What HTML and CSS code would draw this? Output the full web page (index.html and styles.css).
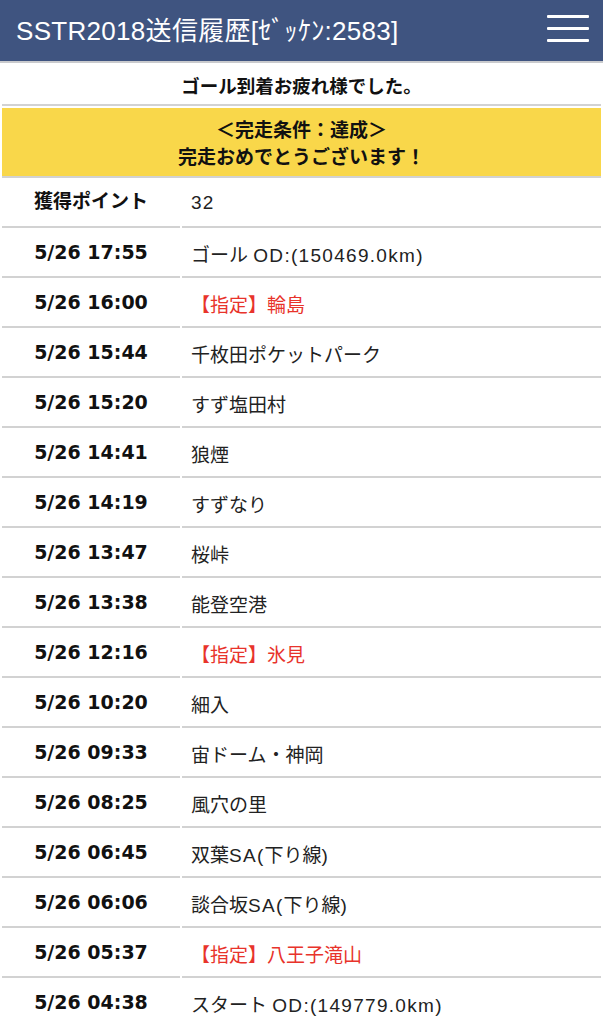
FILE: index.html
```html
<!DOCTYPE html>
<html lang="ja">
<head>
<meta charset="utf-8">
<title>SSTR2018送信履歴</title>
<link rel="stylesheet" href="styles.css">
</head>
<body>
<header class="topbar">
  <h1 class="title">SSTR2018送信履歴[ｾﾞｯｹﾝ:2583]</h1>
  <button class="menu" aria-label="menu"><span></span><span></span><span></span></button>
</header>
<table class="log">
  <tr><td class="msg" colspan="2">ゴール到着お疲れ様でした。</td></tr>
  <tr><td class="done" colspan="2">＜完走条件：達成＞<br>完走おめでとうございます！</td></tr>
  <tr><th class="label">獲得ポイント</th><td><span class="en">32</span></td></tr>
  <tr><th class="time">5/26 17:55</th><td>ゴール <span class="en">OD:(150469.0km)</span></td></tr>
  <tr><th class="time">5/26 16:00</th><td class="red">【指定】輪島</td></tr>
  <tr><th class="time">5/26 15:44</th><td>千枚田ポケットパーク</td></tr>
  <tr><th class="time">5/26 15:20</th><td>すず塩田村</td></tr>
  <tr><th class="time">5/26 14:41</th><td>狼煙</td></tr>
  <tr><th class="time">5/26 14:19</th><td>すずなり</td></tr>
  <tr><th class="time">5/26 13:47</th><td>桜峠</td></tr>
  <tr><th class="time">5/26 13:38</th><td>能登空港</td></tr>
  <tr><th class="time">5/26 12:16</th><td class="red">【指定】氷見</td></tr>
  <tr><th class="time">5/26 10:20</th><td>細入</td></tr>
  <tr><th class="time">5/26 09:33</th><td>宙ドーム・神岡</td></tr>
  <tr><th class="time">5/26 08:25</th><td>風穴の里</td></tr>
  <tr><th class="time">5/26 06:45</th><td>双葉<span class="en">SA(</span>下り線<span class="en">)</span></td></tr>
  <tr><th class="time">5/26 06:06</th><td>談合坂<span class="en">SA(</span>下り線<span class="en">)</span></td></tr>
  <tr><th class="time">5/26 05:37</th><td class="red">【指定】八王子滝山</td></tr>
  <tr><th class="time">5/26 04:38</th><td>スタート <span class="en">OD:(149779.0km)</span></td></tr>
</table>
</body>
</html>
```
FILE: styles.css
```css
html, body {
  margin: 0;
  padding: 0;
  background: #ffffff;
}
body {
  font-family: "Liberation Sans", "Noto Sans CJK JP", sans-serif;
  color: #1a1a1a;
}
.topbar {
  height: 63px;
  box-sizing: border-box;
  background: #3f5480;
  border-bottom: 2px solid #c9cacd;
  display: flex;
  align-items: center;
  justify-content: space-between;
  padding: 0 14px 5px 16px;
}
.title {
  margin: 0;
  font-size: 26px;
  font-weight: normal;
  color: #ffffff;
  white-space: nowrap;
  letter-spacing: 0.3px;
}
.menu {
  width: 42px;
  height: 27px;
  padding: 0;
  border: 0;
  background: transparent;
  display: flex;
  flex-direction: column;
  justify-content: space-between;
}
.menu span {
  display: block;
  height: 3px;
  background: #ffffff;
  border-radius: 1px;
}
.log {
  width: 100%;
  border-collapse: separate;
  border-spacing: 2px;
  margin-top: -2px;
}
.log th, .log td {
  border-bottom: 2px solid #d2d2d2;
  height: 46px;
  padding: 0;
  vertical-align: middle;
  font-size: 19px;
}
.log th {
  width: 178px;
  text-align: center;
  font-weight: bold;
  color: #111111;
}
.log th.label {
  padding-bottom: 7px;
  height: 39px;
}
.log th.time {
  font-family: "DejaVu Sans", "Noto Sans CJK JP", sans-serif;
  padding-bottom: 3px;
  height: 43px;
}
.log td {
  text-align: left;
  padding-left: 9px;
  color: #222222;
}
.log td.msg {
  height: 38px;
  padding: 3px 0 0 0;
  text-align: center;
  font-weight: bold;
  font-size: 18.5px;
  color: #111111;
}
.log td.done {
  background: #f9d74a;
  height: auto;
  padding: 9px 0 5px 0;
  line-height: 27px;
  text-align: center;
  font-weight: bold;
  color: #111111;
}
.log td.red {
  color: #e8332b;
}
.en {
  letter-spacing: 1.3px;
}
```
